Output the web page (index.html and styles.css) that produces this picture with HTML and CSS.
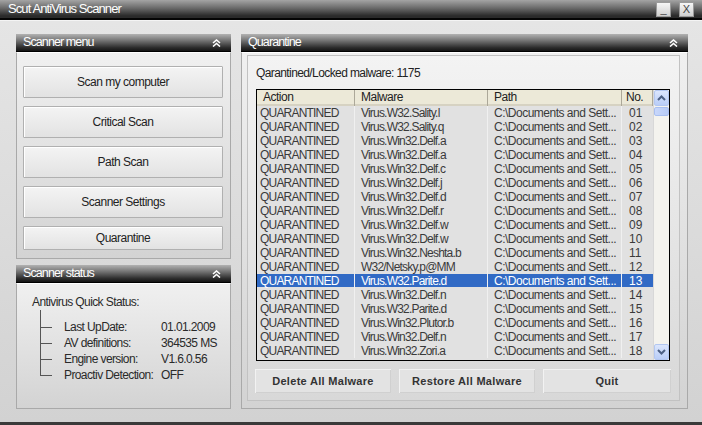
FILE: index.html
```html
<!DOCTYPE html>
<html>
<head>
<meta charset="utf-8">
<link rel="stylesheet" href="styles.css">
</head>
<body>
<div class="window">
  <div class="titlebar">
    <span class="title">Scut AntiVirus Scanner</span>
    <div class="winbtns">
      <span class="wbtn">_</span>
      <span class="wbtn">X</span>
    </div>
  </div>
  <div class="content">
    <div class="leftcol">
      <section class="panel menu">
        <div class="phead"><span>Scanner menu</span>
          <svg class="chev" width="9" height="8" viewBox="0 0 9 8"><path d="M1 4 L4.5 1 L8 4 M1 7.5 L4.5 4.5 L8 7.5" fill="none" stroke="#fff" stroke-width="1.6"/></svg>
        </div>
        <div class="pbody menu-body">
          <button class="mbtn">Scan my computer</button>
          <button class="mbtn">Critical Scan</button>
          <button class="mbtn">Path Scan</button>
          <button class="mbtn">Scanner Settings</button>
          <button class="mbtn short">Quarantine</button>
        </div>
      </section>
      <section class="panel status">
        <div class="phead"><span>Scanner status</span>
          <svg class="chev" width="9" height="8" viewBox="0 0 9 8"><path d="M1 4 L4.5 1 L8 4 M1 7.5 L4.5 4.5 L8 7.5" fill="none" stroke="#fff" stroke-width="1.6"/></svg>
        </div>
        <div class="pbody status-body">
          <div class="st-title">Antivirus Quick Status:</div>
          <ul class="tree">
            <li><span class="k">Last UpDate:</span><span class="v">01.01.2009</span></li>
            <li><span class="k">AV definitions:</span><span class="v">364535 MS</span></li>
            <li><span class="k">Engine version:</span><span class="v">V1.6.0.56</span></li>
            <li><span class="k">Proactiv Detection:</span><span class="v">OFF</span></li>
          </ul>
        </div>
      </section>
    </div>
    <section class="panel quar">
      <div class="phead"><span>Quarantine</span>
        <svg class="chev" width="9" height="8" viewBox="0 0 9 8"><path d="M1 4 L4.5 1 L8 4 M1 7.5 L4.5 4.5 L8 7.5" fill="none" stroke="#fff" stroke-width="1.6"/></svg>
      </div>
      <div class="pbody quar-body">
        <div class="inner">
          <div class="count">Qarantined/Locked malware: 1175</div>
          <div class="list">
            <div class="grid">
              <div class="row head">
                <div class="c a">Action</div><div class="c m">Malware</div><div class="c p">Path</div><div class="c n">No.</div>
              </div>
              <div class="row"><div class="c a">QUARANTINED</div><div class="c m">Virus.W32.Sality.l</div><div class="c p">C:\Documents and Sett...</div><div class="c n">01</div></div>
              <div class="row"><div class="c a">QUARANTINED</div><div class="c m">Virus.W32.Sality.q</div><div class="c p">C:\Documents and Sett...</div><div class="c n">02</div></div>
              <div class="row"><div class="c a">QUARANTINED</div><div class="c m">Virus.Win32.Delf.a</div><div class="c p">C:\Documents and Sett...</div><div class="c n">03</div></div>
              <div class="row"><div class="c a">QUARANTINED</div><div class="c m">Virus.Win32.Delf.a</div><div class="c p">C:\Documents and Sett...</div><div class="c n">04</div></div>
              <div class="row"><div class="c a">QUARANTINED</div><div class="c m">Virus.Win32.Delf.c</div><div class="c p">C:\Documents and Sett...</div><div class="c n">05</div></div>
              <div class="row"><div class="c a">QUARANTINED</div><div class="c m">Virus.Win32.Delf.j</div><div class="c p">C:\Documents and Sett...</div><div class="c n">06</div></div>
              <div class="row"><div class="c a">QUARANTINED</div><div class="c m">Virus.Win32.Delf.d</div><div class="c p">C:\Documents and Sett...</div><div class="c n">07</div></div>
              <div class="row"><div class="c a">QUARANTINED</div><div class="c m">Virus.Win32.Delf.r</div><div class="c p">C:\Documents and Sett...</div><div class="c n">08</div></div>
              <div class="row"><div class="c a">QUARANTINED</div><div class="c m">Virus.Win32.Delf.w</div><div class="c p">C:\Documents and Sett...</div><div class="c n">09</div></div>
              <div class="row"><div class="c a">QUARANTINED</div><div class="c m">Virus.Win32.Delf.w</div><div class="c p">C:\Documents and Sett...</div><div class="c n">10</div></div>
              <div class="row"><div class="c a">QUARANTINED</div><div class="c m">Virus.Win32.Neshta.b</div><div class="c p">C:\Documents and Sett...</div><div class="c n">11</div></div>
              <div class="row"><div class="c a">QUARANTINED</div><div class="c m">W32/Netsky.p@MM</div><div class="c p">C:\Documents and Sett...</div><div class="c n">12</div></div>
              <div class="row sel"><div class="c a">QUARANTINED</div><div class="c m">Virus.W32.Parite.d</div><div class="c p">C:\Documents and Sett...</div><div class="c n">13</div></div>
              <div class="row"><div class="c a">QUARANTINED</div><div class="c m">Virus.Win32.Delf.n</div><div class="c p">C:\Documents and Sett...</div><div class="c n">14</div></div>
              <div class="row"><div class="c a">QUARANTINED</div><div class="c m">Virus.W32.Parite.d</div><div class="c p">C:\Documents and Sett...</div><div class="c n">15</div></div>
              <div class="row"><div class="c a">QUARANTINED</div><div class="c m">Virus.Win32.Plutor.b</div><div class="c p">C:\Documents and Sett...</div><div class="c n">16</div></div>
              <div class="row"><div class="c a">QUARANTINED</div><div class="c m">Virus.Win32.Delf.n</div><div class="c p">C:\Documents and Sett...</div><div class="c n">17</div></div>
              <div class="row"><div class="c a">QUARANTINED</div><div class="c m">Virus.Win32.Zori.a</div><div class="c p">C:\Documents and Sett...</div><div class="c n">18</div></div>
            </div>
            <div class="sbar">
              <div class="sarrow"><svg width="9" height="6" viewBox="0 0 9 6"><path d="M1 5 L4.5 1.5 L8 5" fill="none" stroke="#4d6185" stroke-width="2"/></svg></div>
              <div class="thumb"></div>
              <div class="track"></div>
              <div class="sarrow"><svg width="9" height="6" viewBox="0 0 9 6"><path d="M1 1 L4.5 4.5 L8 1" fill="none" stroke="#4d6185" stroke-width="2"/></svg></div>
            </div>
          </div>
          <div class="actions">
            <button class="abtn">Delete All Malware</button>
            <button class="abtn">Restore All Malware</button>
            <button class="abtn quit">Quit</button>
          </div>
        </div>
      </div>
    </section>
  </div>
</div>
</body>
</html>
```

FILE: styles.css
```css
* { box-sizing: border-box; }
html, body { margin: 0; padding: 0; }
body {
  width: 702px;
  height: 425px;
  overflow: hidden;
  font-family: "Liberation Sans", Arial, sans-serif;
  background: #d6d6d6;
}
.window {
  width: 702px;
  height: 425px;
  display: flex;
  flex-direction: column;
  background: linear-gradient(#e6e6e6, #d2d2d2);
  border-bottom: 3px solid #3a3a3a;
}
.titlebar {
  height: 20px;
  flex: none;
  display: flex;
  align-items: flex-start;
  justify-content: space-between;
  background: linear-gradient(#a4a4a4 0%, #6a6a6a 45%, #2a2a2a 88%);
  border-bottom: 2px solid #050505;
  padding: 0 8px;
}
.title {
  color: #fff;
  font-size: 13px;
  letter-spacing: -0.9px;
  line-height: 18px;
}
.winbtns { display: flex; gap: 8px; padding-top: 2px; }
.wbtn {
  width: 15px;
  height: 15px;
  background: linear-gradient(#f6f6f6, #cfcfcf);
  border: 1px solid #9a9a9a;
  color: #444;
  font-size: 11px;
  line-height: 13px;
  text-align: center;
}
.content {
  flex: 1;
  display: flex;
  gap: 10px;
  padding: 13px 14px 14px 16px;
  border-top: 1px solid #f4f4f4;
}
.leftcol {
  width: 215px;
  display: flex;
  flex-direction: column;
  gap: 7px;
}
.panel { display: flex; flex-direction: column; }
.phead {
  height: 18px;
  flex: none;
  display: flex;
  align-items: center;
  justify-content: space-between;
  padding: 0 10px 0 7px;
  background: linear-gradient(#b2b2b2 0%, #7a7a7a 35%, #2c2c2c 80%, #141414 100%);
  border-bottom: 1px solid #000;
  color: #fff;
  font-size: 12.5px;
  letter-spacing: -0.9px;
}
.phead span { line-height: 16px; padding-bottom: 2px; }
.chev { display: block; }
.pbody {
  flex: 1;
  border: 1px solid #a9a9a9;
  border-top: 1px solid #ffffff;
  background: linear-gradient(#f0f0f0, #d3d3d3);
}
.menu { height: 224px; }
.menu-body {
  display: flex;
  flex-direction: column;
  gap: 8px;
  padding: 13px 7px 8px 6px;
}
.mbtn {
  height: 32px;
  flex: none;
  background: linear-gradient(#f4f4f4, #e2e2e2);
  border: 1px solid #b0b0b0;
  border-radius: 1px;
  box-shadow: inset 1px 1px 0 #fff;
  font-family: "Liberation Sans", Arial, sans-serif;
  font-size: 12px;
  letter-spacing: -0.5px;
  color: #222;
  padding: 0;
}
.mbtn.short { height: 24px; }
.status { flex: 1; }
.status-body {
  padding: 11px 0 0 15px;
  color: #2a2a2a;
  font-size: 12px;
  letter-spacing: -0.6px;
}
.st-title { line-height: 14px; }
.tree {
  list-style: none;
  margin: 1px 0 0 8px;
  padding: 9px 0 0 0;
  position: relative;
}
.tree::before {
  content: "";
  position: absolute;
  left: 0;
  top: 0;
  height: 9px;
  border-left: 1px solid #555;
}
.tree li {
  position: relative;
  display: flex;
  height: 16px;
  line-height: 16px;
  padding-left: 24px;
}
.tree li::before {
  content: "";
  position: absolute;
  left: 0;
  top: 0;
  width: 11px;
  height: 8px;
  border-left: 1px solid #555;
  border-bottom: 1px solid #555;
}
.tree li:not(:last-child)::after {
  content: "";
  position: absolute;
  left: 0;
  top: 8px;
  bottom: 0;
  border-left: 1px solid #555;
}
.tree .k { width: 97px; flex: none; }
.quar { width: 447px; }
.quar-body { padding: 2px 7px 7px 5px; }
.inner {
  height: 100%;
  border: 1px solid #c2c2c2;
  background: linear-gradient(#f3f3f3, #d8d8d8);
  padding: 10px 9px 7px 7px;
  display: flex;
  flex-direction: column;
}
.count {
  font-size: 12px;
  letter-spacing: -0.6px;
  line-height: 14px;
  color: #222;
  padding-left: 1px;
}
.list {
  margin-top: 9px;
  margin-left: 1px;
  height: 272px;
  flex: none;
  border: 1px solid #000;
  display: flex;
  background: #e1e1e1;
}
.grid { width: 396px; flex: none; }
.row {
  display: grid;
  grid-template-columns: 98px 133px 134px 31px;
  height: 14px;
  font-size: 12px;
  line-height: 14px;
  color: #3a3a3a;
  white-space: nowrap;
}
.row .c { border-right: 1px solid #f0f0f0; padding-left: 3px; overflow: hidden; }
.row .a { letter-spacing: -0.8px; }
.row .m { letter-spacing: -0.8px; padding-left: 6px; }
.row .p { letter-spacing: -0.5px; padding-left: 6px; }
.row .n { padding-left: 7px; border-right: none; }
.row.head {
  height: 16px;
  line-height: 15px;
  background: #ece9d8;
  color: #222;
  box-shadow: inset 0 -2px 0 #d6d2c2;
}
.row.head .c {
  border-right: 1px solid #aca899;
  padding-left: 6px;
  letter-spacing: -0.5px;
}
.row.head .n { padding-left: 4px; }
.row.sel .c {
  background: #316ac5;
  color: #fff;
  box-shadow: inset 0 -1px 0 #e1e1e1;
}
.sbar {
  flex: 1;
  display: flex;
  flex-direction: column;
  background: #f4f3ee;
  border-left: 1px solid #d8d8d8;
}
.sarrow {
  height: 16px;
  flex: none;
  display: flex;
  align-items: center;
  justify-content: center;
  background: linear-gradient(#dbe6fd, #b9cdf7);
  border: 1px solid #b3c7f1;
  border-radius: 2px;
}
.thumb {
  height: 9px;
  flex: none;
  margin: 1px 0;
  background: linear-gradient(90deg, #c8d7fb, #b6caf5);
  border: 1px solid #a9bff0;
  border-radius: 2px;
}
.track { flex: 1; }
.actions {
  display: flex;
  gap: 8px;
  margin-top: 8px;
}
.abtn {
  width: 136px;
  height: 24px;
  flex: none;
  background: #e3e3e3;
  border: none;
  box-shadow: inset 1px 1px 0 #f2f2f2, inset -1px -1px 0 #d0d0d0;
  font-family: "Liberation Sans", Arial, sans-serif;
  font-weight: bold;
  font-size: 11px;
  letter-spacing: 0.3px;
  color: #333;
  padding: 0;
}
.abtn.quit { width: 128px; }
```
